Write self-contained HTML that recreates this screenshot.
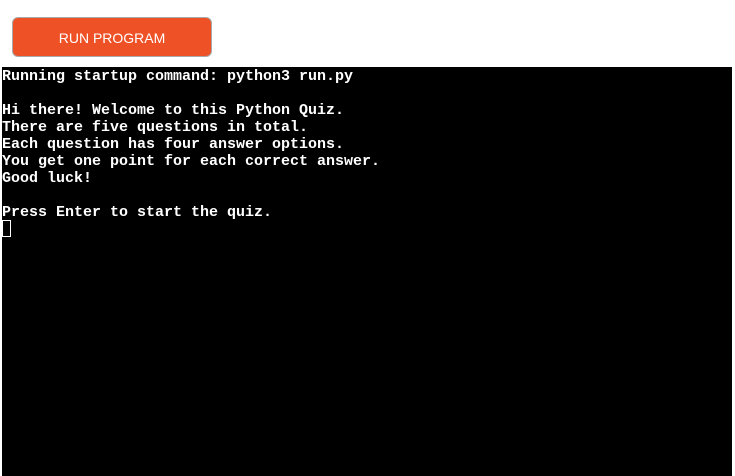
<!DOCTYPE html>
<html><head><style>
html,body{margin:0;padding:0;background:#fff;width:735px;height:476px;overflow:hidden}
.btn{position:absolute;left:12px;top:17px;width:198px;height:38px;background:#ee5125;border:1px solid #a9a9a9;border-radius:6px;color:#fff;font:14px "Liberation Sans",sans-serif;text-align:center;line-height:40px}
.term{position:absolute;left:2px;top:67px;width:730px;height:409px;background:#000}
pre{margin:0;position:absolute;left:0;top:1px;color:#fff;font:bold 15px/17px "Liberation Mono",monospace}
.cur{position:absolute;left:0;top:153px;width:7px;height:15px;border:1px solid #fff}
</style></head><body>
<div class="btn">RUN PROGRAM</div>
<div class="term"><pre>Running startup command: python3 run.py

Hi there! Welcome to this Python Quiz.
There are five questions in total.
Each question has four answer options.
You get one point for each correct answer.
Good luck!

Press Enter to start the quiz.</pre><div class="cur"></div></div>
</body></html>
